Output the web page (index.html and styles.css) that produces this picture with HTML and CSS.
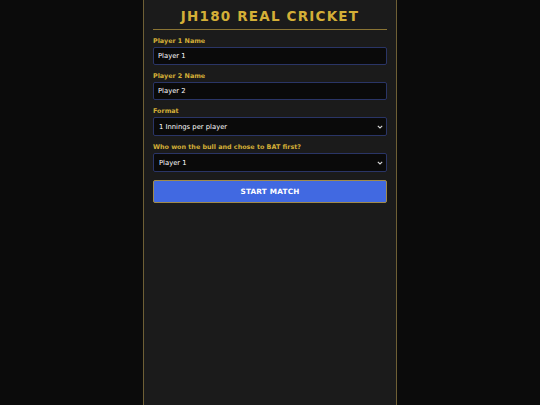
FILE: index.html
```html
<!DOCTYPE html>
<html lang="en">
<head>
    <meta charset="UTF-8">
    <title>JH180 Real Cricket</title>
    <link rel="stylesheet" href="styles.css">
</head>
<body>
    <div class="app">
        <h1 class="title">JH180 REAL CRICKET</h1>
        <form id="setupform">
            <div class="form-group">
                <label for="p1">Player 1 Name</label>
                <input type="text" id="p1" value="Player 1">
            </div>
            <div class="form-group">
                <label for="p2">Player 2 Name</label>
                <input type="text" id="p2" value="Player 2">
            </div>
            <div class="form-group">
                <label for="format">Format</label>
                <div class="select-wrap">
                    <select id="format">
                        <option>1 Innings per player</option>
                        <option>2 Innings per player</option>
                    </select>
                    <svg class="chevron" width="6" height="4" viewBox="0 0 6 4"><path d="M0.8 0.8 L3 3 L5.2 0.8" fill="none" stroke="#d8d8d8" stroke-width="1.1"/></svg>
                </div>
            </div>
            <div class="form-group">
                <label for="bat">Who won the bull and chose to BAT first?</label>
                <div class="select-wrap">
                    <select id="bat">
                        <option>Player 1</option>
                        <option>Player 2</option>
                    </select>
                    <svg class="chevron" width="6" height="4" viewBox="0 0 6 4"><path d="M0.8 0.8 L3 3 L5.2 0.8" fill="none" stroke="#d8d8d8" stroke-width="1.1"/></svg>
                </div>
            </div>
            <button type="button" class="start-btn">START MATCH</button>
        </form>
    </div>
</body>
</html>
```

FILE: styles.css
```css
html, body {
    margin: 0;
    padding: 0;
    height: 100%;
    background-color: #0b0b0b;
    font-family: "DejaVu Sans", Verdana, sans-serif;
}

body {
    display: flex;
    justify-content: center;
}

.app {
    box-sizing: border-box;
    width: 254px;
    min-height: 100%;
    padding: 0 9px;
    background-color: #1b1b1b;
    border-left: 1px solid #6e5f35;
    border-right: 1px solid #6e5f35;
}

.title {
    margin: 8px 0 0;
    padding-bottom: 4px;
    text-align: center;
    font-size: 13.5px;
    line-height: 17px;
    letter-spacing: 1.2px;
    color: #d4af37;
    border-bottom: 1px solid #8a7434;
}

#setupform {
    margin-top: 7px;
}

.form-group {
    margin-bottom: 7px;
}

label {
    display: block;
    margin-bottom: 1px;
    font-size: 6.4px;
    line-height: 9px;
    font-weight: bold;
    color: #d4af37;
}

input[type="text"], select {
    box-sizing: border-box;
    display: block;
    width: 100%;
    height: 18px;
    padding: 0 4px;
    border: 1px solid #2a3566;
    border-radius: 2px;
    background-color: #0a0a0a;
    color: #ffffff;
    font-family: "DejaVu Sans", Verdana, sans-serif;
    font-size: 6.8px;
    outline: none;
}

.select-wrap {
    position: relative;
}

select {
    appearance: none;
    -webkit-appearance: none;
    height: 19px;
    padding-left: 5px;
}

.chevron {
    position: absolute;
    right: 4px;
    top: 8px;
    pointer-events: none;
}

.start-btn {
    box-sizing: border-box;
    display: block;
    width: 100%;
    height: 23px;
    margin-top: 8px;
    border: 1px solid #a08a4a;
    border-radius: 2px;
    background-color: #4169e1;
    color: #ffffff;
    font-family: "DejaVu Sans", Verdana, sans-serif;
    font-size: 7.3px;
    font-weight: bold;
    letter-spacing: 0.2px;
    cursor: pointer;
}
```
